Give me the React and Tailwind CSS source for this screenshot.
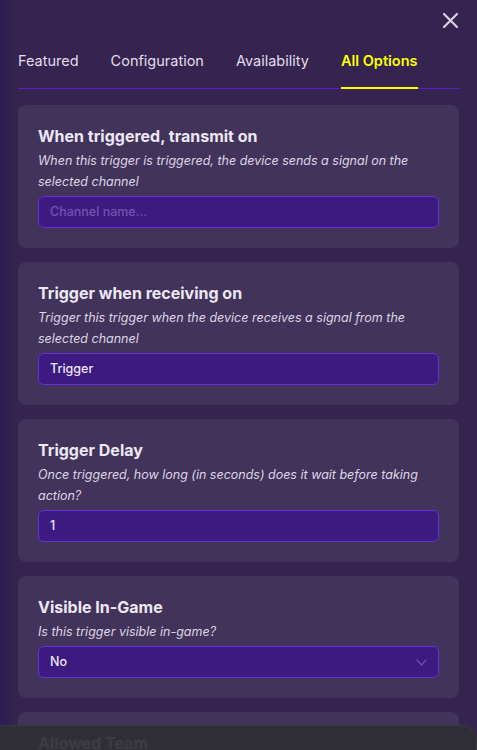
import React from "react";

const tabs = ["Featured", "Configuration", "Availability", "All Options"];

const options = [
  {
    title: "When triggered, transmit on",
    desc: "When this trigger is triggered, the device sends a signal on the selected channel",
    value: "",
    placeholder: "Channel name...",
  },
  {
    title: "Trigger when receiving on",
    desc: "Trigger this trigger when the device receives a signal from the selected channel",
    value: "Trigger",
  },
  {
    title: "Trigger Delay",
    desc: "Once triggered, how long (in seconds) does it wait before taking action?",
    value: "1",
  },
  {
    title: "Visible In-Game",
    desc: "Is this trigger visible in-game?",
    value: "No",
    select: true,
  },
  {
    title: "Allowed Team",
    desc: "Which team is allowed to trigger this trigger?",
    value: "All Teams",
    select: true,
  },
];

const OptionCard = ({ option }) => (
  <div className="rounded-lg bg-[#42335b] p-5">
    <h3 className="text-[16px] leading-[23px] font-bold text-[#ece8f2]">{option.title}</h3>
    <p className="mt-[2px] text-[12.5px] leading-[21px] italic text-[#ddd6e6]">{option.desc}</p>
    <div className="mt-[4px] flex h-[32px] items-center justify-between rounded-md border border-[#6431dc] bg-[#3d1a80] pl-[11px] pr-[11px]">
      {option.value ? (
        <span className="text-[12.5px] font-medium text-[#ece6f7]">{option.value}</span>
      ) : (
        <span className="text-[12.5px] font-medium text-[#7452b3]">{option.placeholder}</span>
      )}
      {option.select && (
        <svg width="11" height="7" viewBox="0 0 11 7" fill="none">
          <path d="M0.5 0.5L5.5 6L10.5 0.5" stroke="#6d4cab" strokeWidth="1.2" />
        </svg>
      )}
    </div>
  </div>
);

export default function App() {
  return (
    <div
      className="relative h-[750px] w-[477px] overflow-hidden bg-[#34244f]"
      style={{ fontFamily: "Inter, 'Noto Sans', sans-serif" }}
    >
      {/* left shade */}
      <div className="absolute inset-y-0 left-0 w-[14px] bg-gradient-to-r from-[#2c1c52] to-transparent" />

      <div className="relative px-[18px]">
        {/* close */}
        <div className="flex h-[40px] justify-end pt-[13px] pr-[1px]">
          <svg width="15" height="15" viewBox="0 0 15 15">
            <path d="M1 1L14 14M14 1L1 14" stroke="#d9d2e3" strokeWidth="2.2" strokeLinecap="round" />
          </svg>
        </div>

        {/* tabs */}
        <div className="flex gap-8 border-b border-[#5422c8]">
          {tabs.map((t) => {
            const active = t === "All Options";
            return (
              <div
                key={t}
                className={`pt-[11px] pb-[16px] text-[14.5px] leading-[20px] -mb-px border-b-2 ${
                  active ? "border-[#ffff00] font-semibold text-[#ffff00]" : "border-transparent text-[#e3dcec]"
                }`}
              >
                {t}
              </div>
            );
          })}
        </div>

        {/* options */}
        <div className="mt-[16px] flex flex-col gap-[14px]">
          {options.map((o) => (
            <OptionCard key={o.title} option={o} />
          ))}
        </div>
      </div>

      {/* bottom sheet */}
      <div className="absolute left-0 right-0 top-[725px] h-[40px] rounded-tr-2xl border-t border-r border-[#3b3a41] bg-[#2f2e34]/[0.93]" />
    </div>
  );
}
